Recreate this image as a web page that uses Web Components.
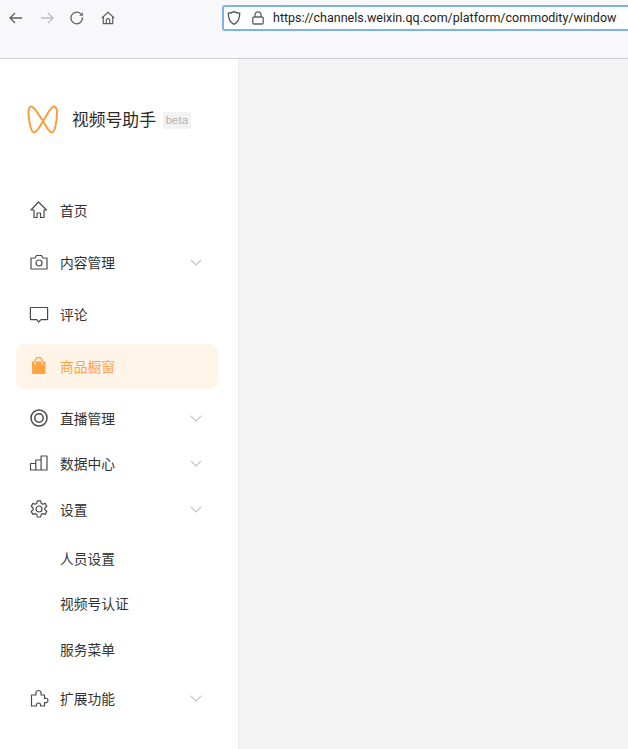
<!DOCTYPE html>
<html lang="zh">
<head>
<meta charset="utf-8">
<title>视频号助手</title>
<style>
  html, body { margin: 0; height: 100%; }
  body {
    display: flex;
    flex-direction: column;
    height: 749px;
    overflow: hidden;
    font-family: "Liberation Sans", "Noto Sans CJK SC", sans-serif;
  }
</style>
</head>
<body>
<browser-bar url="https://channels.weixin.qq.com/platform/commodity/window"></browser-bar>
<app-shell>
  <side-nav slot="side">
    <brand-logo></brand-logo>
    <nav-item label="首页" icon="home" spaced></nav-item>
    <nav-item label="内容管理" icon="camera" arrow spaced></nav-item>
    <nav-item label="评论" icon="comment" spaced></nav-item>
    <nav-item label="商品橱窗" icon="bag" active spaced></nav-item>
    <nav-item label="直播管理" icon="live" arrow></nav-item>
    <nav-item label="数据中心" icon="chart" arrow step></nav-item>
    <nav-item label="设置" icon="gear" arrow tail></nav-item>
    <nav-item label="人员设置" sub></nav-item>
    <nav-item label="视频号认证" sub></nav-item>
    <nav-item label="服务菜单" sub tail></nav-item>
    <nav-item label="扩展功能" icon="puzzle" arrow></nav-item>
  </side-nav>
</app-shell>

<script>
class BrowserBar extends HTMLElement {
    constructor() {
        super();
        this.attachShadow({ mode: 'open' });
    }

    connectedCallback() {
        const url = this.getAttribute('url') || '';
        this.shadowRoot.innerHTML = `
            <style>
                :host {
                    display: block;
                    height: 58px;
                    flex: none;
                    background: #f8f8fb;
                    border-bottom: 1px solid #d0d0d4;
                }
                .row {
                    display: flex;
                    align-items: center;
                    height: 35px;
                }
                .btns {
                    display: flex;
                    align-items: center;
                    gap: 10.500px;
                    padding-left: 6px;
                    width: 222px;
                    box-sizing: border-box;
                }
                .btns svg { width: 20px; height: 20px; display: block; flex: none; }
                .url {
                    flex: 1;
                    min-width: 0;
                    height: 26px;
                    box-sizing: border-box;
                    display: flex;
                    align-items: center;
                    background: #fff;
                    border: 2px solid #7cb0ef;
                    border-right: 0;
                    border-radius: 3px 0 0 3px;
                    padding-left: 1px;
                    gap: 7px;
                    font: 12.500px Roboto, sans-serif;
                    color: #1d1d20;
                    white-space: nowrap;
                }
                .url svg { flex: none; display: block; }
            </style>
            <div class="row">
                <div class="btns">
                    <svg viewBox="0 0 20 20" fill="none" stroke="#5f5f63" stroke-width="1.300"><path d="M16 10H4.500M9 5l-5 5 5 5"/></svg>
                    <svg viewBox="0 0 20 20" fill="none" stroke="#bdbdc1" stroke-width="1.300"><path d="M4 10h11.500M11 5l5 5-5 5"/></svg>
                    <svg viewBox="0 0 20 20" fill="none" stroke="#5f5f63" stroke-width="1.300"><path d="M15.500 9.500a5.800 5.800 0 1 1-1.700-3.600"/><path d="M15.800 4.200v3.600h-3.600z" fill="#5f5f63" stroke="none"/></svg>
                    <svg viewBox="0 0 20 20" fill="none" stroke="#5f5f63" stroke-width="1.200"><path d="M3.800 10 10 4.200l6.200 5.800M5.300 9v6.600h9.400V9"/><path d="M8.300 15.600v-3.200a1.700 1.700 0 0 1 3.400 0v3.200"/></svg>
                </div>
                <div class="url">
                    <svg width="18" height="18" viewBox="0 0 18 18" fill="none" stroke="#555559" stroke-width="1.300"><path d="M9 2.600c2 1.100 3.800 1.500 5.700 1.600 0 5.400-1.600 9.200-5.700 11.200C4.900 13.400 3.300 9.600 3.300 4.200 5.200 4.100 7 3.700 9 2.600z"/></svg>
                    <svg width="16" height="16" viewBox="0 0 16 16" fill="none" stroke="#5f5f63" stroke-width="1.300"><rect x="2.800" y="7" width="10.400" height="7" rx="1.300"/><path d="M5 7V4.800a3 3 0 0 1 6 0V7"/></svg>
                    <span>${url}</span>
                </div>
            </div>
        `;
    }
}

class AppShell extends HTMLElement {
    constructor() {
        super();
        this.attachShadow({ mode: 'open' });
        this.shadowRoot.innerHTML = `
            <style>
                :host {
                    display: flex;
                    flex: 1;
                    min-height: 0;
                    background: #f4f4f4;
                }
                main { flex: 1; }
            </style>
            <slot name="side"></slot>
            <main></main>
        `;
    }
}

class SideNav extends HTMLElement {
    constructor() {
        super();
        this.attachShadow({ mode: 'open' });
        this.shadowRoot.innerHTML = `
            <style>
                :host {
                    display: block;
                    width: 239px;
                    flex: none;
                    box-sizing: border-box;
                    background: #fff;
                    border-right: 1px solid #e9e9e9;
                    padding: 0 20px 0 16px;
                    overflow: hidden;
                }
            </style>
            <slot></slot>
        `;
    }
}

class BrandLogo extends HTMLElement {
    constructor() {
        super();
        this.attachShadow({ mode: 'open' });
        this.shadowRoot.innerHTML = `
            <style>
                :host {
                    display: flex;
                    align-items: center;
                    height: 129px;
                    padding-left: 11px;
                    padding-bottom: 7px;
                    box-sizing: border-box;
                }
                svg { display: block; flex: none; }
                .name {
                    margin-left: 13px;
                    margin-top: -2px;
                    font-size: 16.800px;
                    color: #2b2b2b;
                }
                .beta {
                    margin-left: 7px;
                    width: 28px;
                    text-align: center;
                    height: 17px;
                    line-height: 17px;
                    font-size: 11.500px;
                    color: #b4b4b4;
                    background: #f2f2f2;
                    border-radius: 3px;
                }
            </style>
            <svg width="32" height="30" viewBox="0 0 32 30" fill="none" stroke="#fa9d3b" stroke-width="2">
                <path d="M4 1.500C8 1.500 12 11 16 16 19 21 22 27.500 25 27.500 28 27.500 30 15 30 8 30 4 29 1.500 27 1.500 23 1.500 20 11 16 16 13 21 10 27.500 7 27.500 4 27.500 1.500 15 1.500 8 1.500 4 2 1.500 4 1.500z"/>
            </svg>
            <span class="name">视频号助手</span>
            <span class="beta">beta</span>
        `;
    }
}

const NAV_ICONS = {
    home: '<path d="M9.500 2 2 10h3v7.500h3V13h3.500v4.500h3.500V10h2.500z" stroke-linejoin="round"/>',
    camera: '<path d="M2 6h4l1.500-2.500h5L14 6h4v11H2z" stroke-linejoin="round"/><circle cx="10" cy="11" r="3"/>',
    comment: '<path d="M2 3.500h16a.6.6 0 0 1 .6.600V15a.6.6 0 0 1-.6.600h-6L9.500 18 7.800 15.600H2a.6.6 0 0 1-.6-.600V4.100a.6.6 0 0 1 .6-.600z" stroke-linejoin="round"/>',
    bag: '<path d="M3 5.500h13.500V17a1 1 0 0 1-1 1H4a1 1 0 0 1-1-1z" fill="#fda544" stroke="none"/><path d="M6.300 8.500V5a3.400 3.400 0 0 1 6.800 0v3.500" stroke="#fda544" stroke-width="1.500"/><path d="M6.300 6v2.500M13.100 6v2.500" stroke="#fff0dd" stroke-width="1.400"/>',
    live: '<circle cx="10" cy="10" r="8" stroke-width="1.500"/><circle cx="10" cy="10" r="4.200" stroke-width="1.500"/>',
    chart: '<path d="M1.500 10.500h5.300v6.500H1.500zM6.800 7h5.300v10H6.800zM12.100 3h5.900v14h-5.900z" stroke-linejoin="round"/>',
    gear: '<circle cx="10" cy="10" r="3"/><path d="M8.300 1.800h3.400l.5 2.500 1.500.9 2.400-.8 1.700 2.900-1.900 1.700v1.800l1.900 1.700-1.700 2.900-2.400-.8-1.500.9-.5 2.500H8.300l-.5-2.500-1.500-.9-2.400.8-1.700-2.900 1.900-1.700V9L2.200 7.300l1.700-2.900 2.400.8 1.500-.9z" stroke-linejoin="round"/>',
    puzzle: '<path d="M2.500 17V6H7C6.500 4 7 1.500 9.500 1.500 12 1.500 12.500 4 12 6h3.500v3.500C17 9 19 9.500 19 11.500c0 2-2 2.500-3.500 2V17h-4C12 15.500 11 14 9.500 14S7 15.500 7.500 17z" stroke-linejoin="round"/>'
};

class NavItem extends HTMLElement {
    constructor() {
        super();
        this.attachShadow({ mode: 'open' });
    }

    connectedCallback() {
        const label = this.getAttribute('label') || '';
        const icon = NAV_ICONS[this.getAttribute('icon')] || '';
        const arrow = this.hasAttribute('arrow')
            ? '<svg class="arrow" width="12" height="7" viewBox="0 0 12 7" fill="none" stroke="#c4c4c4" stroke-width="1.200"><path d="M.8.800 6 6 11.200.800"/></svg>'
            : '';
        this.shadowRoot.innerHTML = `
            <style>
                :host {
                    display: flex;
                    align-items: center;
                    height: 45px;
                    box-sizing: border-box;
                    padding-left: 13px;
                    padding-right: 16px;
                    font-size: 13.750px;
                    color: #333;
                    border-radius: 8px;
                }
                :host([spaced]) { margin-bottom: 7px; }
                :host([step]) { margin-bottom: 1px; }
                :host([tail]) { margin-bottom: 4px; }
                :host([sub]) { height: 45.500px; padding-left: 44px; }
                :host([active]) {
                    background: #fff4e8;
                    color: #fda544;
                }
                .icon { display: block; flex: none; width: 20px; height: 20px; margin: -1px 11px 0 0; }
                span { flex: 1; margin-top: -2px; }
                .arrow { display: block; flex: none; margin-top: -1px; }
            </style>
            ${icon ? `<svg class="icon" viewBox="0 0 20 20" fill="none" stroke="#4a4a4a" stroke-width="1.200">${icon}</svg>` : ''}
            <span>${label}</span>
            ${arrow}
        `;
    }
}

customElements.define('browser-bar', BrowserBar);
customElements.define('app-shell', AppShell);
customElements.define('side-nav', SideNav);
customElements.define('brand-logo', BrandLogo);
customElements.define('nav-item', NavItem);
</script>
</body>
</html>
